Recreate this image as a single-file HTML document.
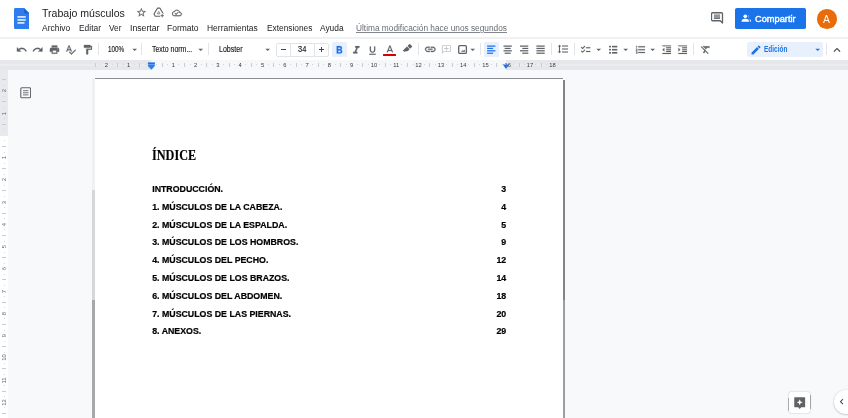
<!DOCTYPE html>
<html>
<head>
<meta charset="utf-8">
<title>Trabajo músculos</title>
<style>
*{margin:0;padding:0;box-sizing:border-box;}
html,body{width:848px;height:418px;overflow:hidden;background:#f8f9fa;font-family:"Liberation Sans",sans-serif;}
.abs{position:absolute;}
#clip{position:absolute;left:0;top:0;width:848px;height:418px;overflow:hidden;}
#root{position:absolute;left:-8px;top:-8px;width:864px;height:434px;background:#f8f9fa;filter:blur(0.5px);}
#in{position:absolute;left:8px;top:8px;width:848px;height:418px;}
.t{position:absolute;white-space:nowrap;line-height:1;}
.sep{position:absolute;top:44px;width:1px;height:12px;background:#dadce0;}
.rn{position:absolute;top:62.4px;font-size:5.8px;color:#3c4043;line-height:7px;width:14px;text-align:center;}
.rv{position:absolute;left:0.5px;font-size:5.8px;color:#5f6368;line-height:7px;width:14px;height:7px;text-align:center;transform:rotate(-90deg);transform-origin:50% 50%;}
.tk{position:absolute;width:1px;background:#cacdd0;}
.tkv{position:absolute;height:1px;background:#cacdd0;}
</style>
</head>
<body>
<div id="clip"><div id="root"><div id="in">

<div class="abs" style="left:-8px;top:-8px;width:864px;height:45px;background:#fff;"></div>
<div class="abs" style="left:-8px;top:38px;width:864px;height:23px;background:#fff;"></div>
<div class="abs" style="left:-8px;top:36.8px;width:864px;height:2.200px;background:#f0f1f3;"></div>
<div class="abs" style="left:-8px;top:60.2px;width:864px;height:9.7px;background:#e5e7ea;"></div>
<div class="abs" style="left:-8px;top:64.2px;width:864px;height:1.600px;background:#eaecee;"></div>
<div class="abs" style="left:151px;top:60.2px;width:355px;height:9.700px;background:#f6f7f9;"></div>
<div class="abs" style="left:-8px;top:70px;width:16px;height:356px;background:#fff;"></div>
<div class="abs" style="left:-8px;top:69.800px;width:16px;height:66px;background:#e7e9ec;"></div>
<div class="rn" style="left:99.4px">2</div>
<div class="rn" style="left:121.7px">1</div>
<div class="rn" style="left:166.3px">1</div>
<div class="rn" style="left:188.6px">2</div>
<div class="rn" style="left:210.9px">3</div>
<div class="rn" style="left:233.2px">4</div>
<div class="rn" style="left:255.5px">5</div>
<div class="rn" style="left:277.8px">6</div>
<div class="rn" style="left:300.1px">7</div>
<div class="rn" style="left:322.4px">8</div>
<div class="rn" style="left:344.7px">9</div>
<div class="rn" style="left:367.0px">10</div>
<div class="rn" style="left:389.3px">11</div>
<div class="rn" style="left:411.6px">12</div>
<div class="rn" style="left:433.9px">13</div>
<div class="rn" style="left:456.2px">14</div>
<div class="rn" style="left:478.5px">15</div>
<div class="rn" style="left:500.8px">16</div>
<div class="rn" style="left:523.1px">17</div>
<div class="rn" style="left:545.4px">18</div>
<div class="tk" style="left:94.8px;top:63px;height:3.800px"></div>
<div class="tk" style="left:100.3px;top:64.300px;height:1px;opacity:.8"></div>
<div class="tk" style="left:111.5px;top:64.300px;height:1px;opacity:.8"></div>
<div class="tk" style="left:117.0px;top:63px;height:3.800px"></div>
<div class="tk" style="left:122.6px;top:64.300px;height:1px;opacity:.8"></div>
<div class="tk" style="left:133.8px;top:64.300px;height:1px;opacity:.8"></div>
<div class="tk" style="left:139.3px;top:63px;height:3.800px"></div>
<div class="tk" style="left:144.9px;top:64.300px;height:1px;opacity:.8"></div>
<div class="tk" style="left:156.1px;top:64.300px;height:1px;opacity:.8"></div>
<div class="tk" style="left:161.7px;top:63px;height:3.800px"></div>
<div class="tk" style="left:167.2px;top:64.300px;height:1px;opacity:.8"></div>
<div class="tk" style="left:178.4px;top:64.300px;height:1px;opacity:.8"></div>
<div class="tk" style="left:183.9px;top:63px;height:3.800px"></div>
<div class="tk" style="left:189.5px;top:64.300px;height:1px;opacity:.8"></div>
<div class="tk" style="left:200.7px;top:64.300px;height:1px;opacity:.8"></div>
<div class="tk" style="left:206.2px;top:63px;height:3.800px"></div>
<div class="tk" style="left:211.8px;top:64.300px;height:1px;opacity:.8"></div>
<div class="tk" style="left:223.0px;top:64.300px;height:1px;opacity:.8"></div>
<div class="tk" style="left:228.6px;top:63px;height:3.800px"></div>
<div class="tk" style="left:234.1px;top:64.300px;height:1px;opacity:.8"></div>
<div class="tk" style="left:245.3px;top:64.300px;height:1px;opacity:.8"></div>
<div class="tk" style="left:250.9px;top:63px;height:3.800px"></div>
<div class="tk" style="left:256.4px;top:64.300px;height:1px;opacity:.8"></div>
<div class="tk" style="left:267.6px;top:64.300px;height:1px;opacity:.8"></div>
<div class="tk" style="left:273.1px;top:63px;height:3.800px"></div>
<div class="tk" style="left:278.7px;top:64.300px;height:1px;opacity:.8"></div>
<div class="tk" style="left:289.9px;top:64.300px;height:1px;opacity:.8"></div>
<div class="tk" style="left:295.5px;top:63px;height:3.800px"></div>
<div class="tk" style="left:301.0px;top:64.300px;height:1px;opacity:.8"></div>
<div class="tk" style="left:312.2px;top:64.300px;height:1px;opacity:.8"></div>
<div class="tk" style="left:317.8px;top:63px;height:3.800px"></div>
<div class="tk" style="left:323.3px;top:64.300px;height:1px;opacity:.8"></div>
<div class="tk" style="left:334.5px;top:64.300px;height:1px;opacity:.8"></div>
<div class="tk" style="left:340.1px;top:63px;height:3.800px"></div>
<div class="tk" style="left:345.6px;top:64.300px;height:1px;opacity:.8"></div>
<div class="tk" style="left:356.8px;top:64.300px;height:1px;opacity:.8"></div>
<div class="tk" style="left:362.4px;top:63px;height:3.800px"></div>
<div class="tk" style="left:367.9px;top:64.300px;height:1px;opacity:.8"></div>
<div class="tk" style="left:379.1px;top:64.300px;height:1px;opacity:.8"></div>
<div class="tk" style="left:384.6px;top:63px;height:3.800px"></div>
<div class="tk" style="left:390.2px;top:64.300px;height:1px;opacity:.8"></div>
<div class="tk" style="left:401.4px;top:64.300px;height:1px;opacity:.8"></div>
<div class="tk" style="left:406.9px;top:63px;height:3.800px"></div>
<div class="tk" style="left:412.5px;top:64.300px;height:1px;opacity:.8"></div>
<div class="tk" style="left:423.7px;top:64.300px;height:1px;opacity:.8"></div>
<div class="tk" style="left:429.2px;top:63px;height:3.800px"></div>
<div class="tk" style="left:434.8px;top:64.300px;height:1px;opacity:.8"></div>
<div class="tk" style="left:446.0px;top:64.300px;height:1px;opacity:.8"></div>
<div class="tk" style="left:451.6px;top:63px;height:3.800px"></div>
<div class="tk" style="left:457.1px;top:64.300px;height:1px;opacity:.8"></div>
<div class="tk" style="left:468.3px;top:64.300px;height:1px;opacity:.8"></div>
<div class="tk" style="left:473.9px;top:63px;height:3.800px"></div>
<div class="tk" style="left:479.4px;top:64.300px;height:1px;opacity:.8"></div>
<div class="tk" style="left:490.6px;top:64.300px;height:1px;opacity:.8"></div>
<div class="tk" style="left:496.2px;top:63px;height:3.800px"></div>
<div class="tk" style="left:501.7px;top:64.300px;height:1px;opacity:.8"></div>
<div class="tk" style="left:512.9px;top:64.300px;height:1px;opacity:.8"></div>
<div class="tk" style="left:518.5px;top:63px;height:3.800px"></div>
<div class="tk" style="left:524.0px;top:64.300px;height:1px;opacity:.8"></div>
<div class="tk" style="left:535.2px;top:64.300px;height:1px;opacity:.8"></div>
<div class="tk" style="left:540.8px;top:63px;height:3.800px"></div>
<div class="tk" style="left:546.3px;top:64.300px;height:1px;opacity:.8"></div>
<div class="tk" style="left:557.5px;top:64.300px;height:1px;opacity:.8"></div>
<div class="rv" style="top:87.3px;left:-3px">2</div>
<div class="rv" style="top:109.6px;left:-3px">1</div>
<div class="rv" style="top:154.1px;left:-3px">1</div>
<div class="rv" style="top:176.3px;left:-3px">2</div>
<div class="rv" style="top:198.6px;left:-3px">3</div>
<div class="rv" style="top:220.8px;left:-3px">4</div>
<div class="rv" style="top:243.1px;left:-3px">5</div>
<div class="rv" style="top:265.3px;left:-3px">6</div>
<div class="rv" style="top:287.6px;left:-3px">7</div>
<div class="rv" style="top:309.8px;left:-3px">8</div>
<div class="rv" style="top:332.1px;left:-3px">9</div>
<div class="rv" style="top:354.3px;left:-3px">10</div>
<div class="rv" style="top:376.6px;left:-3px">11</div>
<div class="rv" style="top:398.8px;left:-3px">12</div>
<div class="tkv" style="top:79.2px;left:2.300px;width:3.400px"></div>
<div class="tkv" style="top:84.7px;left:3.500px;width:1px;opacity:.8"></div>
<div class="tkv" style="top:95.9px;left:3.500px;width:1px;opacity:.8"></div>
<div class="tkv" style="top:101.4px;left:2.300px;width:3.400px"></div>
<div class="tkv" style="top:107.0px;left:3.500px;width:1px;opacity:.8"></div>
<div class="tkv" style="top:118.1px;left:3.500px;width:1px;opacity:.8"></div>
<div class="tkv" style="top:123.7px;left:2.300px;width:3.400px"></div>
<div class="tkv" style="top:129.2px;left:3.500px;width:1px;opacity:.8"></div>
<div class="tkv" style="top:140.4px;left:3.500px;width:1px;opacity:.8"></div>
<div class="tkv" style="top:145.9px;left:2.300px;width:3.400px"></div>
<div class="tkv" style="top:151.5px;left:3.500px;width:1px;opacity:.8"></div>
<div class="tkv" style="top:162.6px;left:3.500px;width:1px;opacity:.8"></div>
<div class="tkv" style="top:168.2px;left:2.300px;width:3.400px"></div>
<div class="tkv" style="top:173.7px;left:3.500px;width:1px;opacity:.8"></div>
<div class="tkv" style="top:184.9px;left:3.500px;width:1px;opacity:.8"></div>
<div class="tkv" style="top:190.4px;left:2.300px;width:3.400px"></div>
<div class="tkv" style="top:196.0px;left:3.500px;width:1px;opacity:.8"></div>
<div class="tkv" style="top:207.1px;left:3.500px;width:1px;opacity:.8"></div>
<div class="tkv" style="top:212.7px;left:2.300px;width:3.400px"></div>
<div class="tkv" style="top:218.2px;left:3.500px;width:1px;opacity:.8"></div>
<div class="tkv" style="top:229.4px;left:3.500px;width:1px;opacity:.8"></div>
<div class="tkv" style="top:234.9px;left:2.300px;width:3.400px"></div>
<div class="tkv" style="top:240.5px;left:3.500px;width:1px;opacity:.8"></div>
<div class="tkv" style="top:251.6px;left:3.500px;width:1px;opacity:.8"></div>
<div class="tkv" style="top:257.2px;left:2.300px;width:3.400px"></div>
<div class="tkv" style="top:262.7px;left:3.500px;width:1px;opacity:.8"></div>
<div class="tkv" style="top:273.9px;left:3.500px;width:1px;opacity:.8"></div>
<div class="tkv" style="top:279.4px;left:2.300px;width:3.400px"></div>
<div class="tkv" style="top:285.0px;left:3.500px;width:1px;opacity:.8"></div>
<div class="tkv" style="top:296.1px;left:3.500px;width:1px;opacity:.8"></div>
<div class="tkv" style="top:301.7px;left:2.300px;width:3.400px"></div>
<div class="tkv" style="top:307.2px;left:3.500px;width:1px;opacity:.8"></div>
<div class="tkv" style="top:318.4px;left:3.500px;width:1px;opacity:.8"></div>
<div class="tkv" style="top:323.9px;left:2.300px;width:3.400px"></div>
<div class="tkv" style="top:329.5px;left:3.500px;width:1px;opacity:.8"></div>
<div class="tkv" style="top:340.6px;left:3.500px;width:1px;opacity:.8"></div>
<div class="tkv" style="top:346.2px;left:2.300px;width:3.400px"></div>
<div class="tkv" style="top:351.7px;left:3.500px;width:1px;opacity:.8"></div>
<div class="tkv" style="top:362.9px;left:3.500px;width:1px;opacity:.8"></div>
<div class="tkv" style="top:368.4px;left:2.300px;width:3.400px"></div>
<div class="tkv" style="top:374.0px;left:3.500px;width:1px;opacity:.8"></div>
<div class="tkv" style="top:385.1px;left:3.500px;width:1px;opacity:.8"></div>
<div class="tkv" style="top:390.7px;left:2.300px;width:3.400px"></div>
<div class="tkv" style="top:396.2px;left:3.500px;width:1px;opacity:.8"></div>
<div class="tkv" style="top:407.4px;left:3.500px;width:1px;opacity:.8"></div>
<div class="tkv" style="top:412.9px;left:2.300px;width:3.400px"></div>
<svg class="abs" style="left:146px;top:60.5px" width="10" height="10" viewBox="0 0 10 10"><rect x="1.900" y="1.400" width="7.000" height="2" fill="#1a73e8"/><path d="M1.900 3.400 H8.900 V5 L5.400 8.700 L1.900 5 Z" fill="#2f80ed"/></svg>
<svg class="abs" style="left:500.8px;top:60.5px" width="10" height="10" viewBox="0 0 10 10"><path d="M1.800 3.400 L8.200 3.400 L5 7.900 Z" fill="#1a73e8"/></svg>
<div class="abs" style="left:94px;top:78px;width:470px;height:345px;background:#fff;"></div>
<div class="abs" style="left:95px;top:78px;width:468px;height:1px;background:#8a8c8f;"></div>
<div class="abs" style="left:563px;top:80px;width:2.2px;height:220px;background:#828487;"></div>
<div class="abs" style="left:563px;top:300px;width:2.200px;height:126px;background:#9c9ea1;"></div>
<div class="abs" style="left:92px;top:79px;width:3px;height:111px;background:#eff0f2;"></div>
<div class="abs" style="left:92.2px;top:190px;width:3.100px;height:110px;background:#d5d7d9;"></div>
<div class="abs" style="left:92.2px;top:300px;width:3.100px;height:126px;background:#a6a8aa;"></div>
<svg class="abs" style="left:13.5px;top:8.1px" width="15.5" height="21.1" viewBox="0 0 15.5 21.1"><path d="M1.500 0 H10 L15.500 5.500 V19.600 a1.500 1.500 0 0 1 -1.500 1.500 H1.500 a1.500 1.500 0 0 1 -1.500 -1.500 V1.500 a1.500 1.500 0 0 1 1.500 -1.500 z" fill="#2e7cee"/><path d="M10 0 L15.500 5.500 H11.200 a1.200 1.200 0 0 1 -1.200 -1.200 z" fill="#1b62d3"/><rect x="3.400" y="8.100" width="8.300" height="1.650" fill="#e4eefd"/><rect x="3.400" y="11.100" width="8.300" height="1.650" fill="#e4eefd"/><rect x="3.400" y="14.100" width="7.100" height="1.650" fill="#e4eefd"/></svg>
<svg class="abs" style="left:135.9px;top:6.9px;overflow:visible" width="10.8" height="10.8" viewBox="0 0 24 24"><path fill="#5f6368" stroke="#5f6368" stroke-width="0.5" stroke-linejoin="round" d="M22 9.240l-7.190-.620L12 2 9.190 8.630 2 9.240l5.460 4.730L5.820 21 12 17.270 18.180 21l-1.630-7.030L22 9.240zM12 15.400l-3.760 2.270 1-4.280-3.320-2.880 4.380-.380L12 6.100l1.710 4.040 4.380.380-3.320 2.880 1 4.280L12 15.400z"/></svg>
<svg class="abs" style="left:153.3px;top:7.3px" width="11.4" height="10.8" viewBox="0 0 24 23"><path d="M9.3 2.5 H14.700 L22 15 L19.300 19.800 H4.700 L2 15 Z" fill="none" stroke="#5f6368" stroke-width="2.400" stroke-linejoin="round"/><path d="M9 14.500 L12 9.300 L15 14.500 Z" fill="none" stroke="#5f6368" stroke-width="1.500"/><rect x="15" y="14" width="9" height="9" fill="#fff"/><path d="M19.500 15 v7 M16 18.500 h7" stroke="#5f6368" stroke-width="2" fill="none"/></svg>
<svg class="abs" style="left:171.9px;top:8px;overflow:visible" width="9.8" height="9.8" viewBox="0 0 24 24"><path fill="#5f6368" stroke="#5f6368" stroke-width="0.5" stroke-linejoin="round" d="M19.350 10.040C18.670 6.590 15.640 4 12 4 9.110 4 6.600 5.640 5.350 8.040 2.340 8.360 0 10.910 0 14c0 3.310 2.690 6 6 6h13c2.760 0 5-2.240 5-5 0-2.640-2.050-4.780-4.650-4.960zM19 18H6c-2.210 0-4-1.790-4-4 0-2.050 1.530-3.760 3.560-3.970l1.070-.110.500-.950C8.080 7.140 9.940 6 12 6c2.620 0 4.880 1.860 5.390 4.430l.300 1.500 1.530.110c1.560.100 2.780 1.410 2.780 2.960 0 1.650-1.350 3-3 3zm-9-3.820l-2.090-2.090L6.500 13.500 10 17l6.010-6.010-1.410-1.410z"/></svg>
<svg class="abs" style="left:710.6px;top:11.8px" width="13" height="12.4" viewBox="0 0 26 24.8"><path d="M3 1.500 H21 a2 2 0 0 1 2 2 V22 L18.500 17.500 H3 a2 2 0 0 1 -2 -2 V3.500 a2 2 0 0 1 2 -2 z" fill="none" stroke="#5f6368" stroke-width="2.600" stroke-linejoin="round"/><path d="M5.800 6.400 h12.400 M5.800 9.600 h12.400 M5.800 12.800 h12.400" stroke="#70757a" stroke-width="2.500"/></svg>
<div class="abs" style="left:735px;top:8px;width:70.6px;height:21.4px;background:#1a73e8;border-radius:1.800px;"></div>
<svg class="abs" style="left:741.2px;top:13.2px" width="10.8" height="10.8" viewBox="0 0 24 24"><circle cx="9.500" cy="7.500" r="4" fill="#fff"/><path d="M1.500 19.500 v-2.200 c0-2.900 5.300-4.300 8-4.300 s8 1.400 8 4.300 v2.200 z" fill="#fff"/><path d="M15.600 3.800 a4 4 0 0 1 0 7.400 a5.600 5.600 0 0 0 0 -7.400 z M18 13.600 c2.300.600 4.500 1.800 4.500 3.700 v2.200 h-3 v-2.200 c0-1.500-.600-2.700-1.500-3.700z" fill="#fff" opacity=".75"/></svg>
<div class="abs" style="left:817px;top:9px;width:19.6px;height:19.6px;background:#ea6b0a;border-radius:50%;"></div>
<div class="abs" style="left:332.2px;top:42px;width:14.8px;height:14.8px;background:#e8f0fe;border-radius:1.500px;"></div>
<div class="abs" style="left:484px;top:42px;width:15px;height:14.8px;background:#e8f0fe;border-radius:1.500px;"></div>
<div class="abs" style="left:747px;top:42px;width:76px;height:14.8px;background:#e8f0fe;border-radius:2px;"></div>
<svg class="abs" style="left:15.6px;top:44.1px;overflow:visible" width="11.4" height="11.4" viewBox="0 0 24 24"><path fill="#5f6368" stroke="#5f6368" stroke-width="0.5" stroke-linejoin="round" d="M12.5 8c-2.65 0-5.05.99-6.9 2.6L2 7v9h9l-3.620-3.620c1.390-1.160 3.160-1.880 5.120-1.880 3.540 0 6.550 2.310 7.600 5.500l2.370-.780C21.080 11.030 17.150 8 12.500 8z"/></svg>
<svg class="abs" style="left:32.24px;top:44.1px;overflow:visible" width="11.4" height="11.4" viewBox="0 0 24 24"><path fill="#5f6368" stroke="#5f6368" stroke-width="0.5" stroke-linejoin="round" d="M18.400 10.600C16.550 8.990 14.150 8 11.500 8c-4.650 0-8.580 3.030-9.960 7.220L3.900 16c1.050-3.190 4.050-5.500 7.600-5.500 1.950 0 3.730.720 5.120 1.880L13 16h9V7l-3.600 3.600z"/></svg>
<svg class="abs" style="left:48.7px;top:44.25px;overflow:visible" width="11" height="11" viewBox="0 0 24 24"><path fill="#5f6368" stroke="#5f6368" stroke-width="0.5" stroke-linejoin="round" d="M19 8H5c-1.660 0-3 1.340-3 3v6h4v4h12v-4h4v-6c0-1.660-1.340-3-3-3zm-3 11H8v-5h8v5zm3-7c-.550 0-1-.450-1-1s.450-1 1-1 1 .450 1 1-.450 1-1 1zm-1-9H6v4h12V3z"/></svg>
<svg class="abs" style="left:64.7px;top:44.05px;overflow:visible" width="11.4" height="11.4" viewBox="0 0 24 24"><path fill="#5f6368" stroke="#5f6368" stroke-width="0.5" stroke-linejoin="round" d="M12.450 16h2.090L9.430 3H7.570L2.460 16h2.090l1.120-3h5.640l1.140 3zm-6.020-5L8.500 5.480 10.570 11H6.430zm15.160.590l-8.090 8.090L9.830 16l-1.410 1.410 5.090 5.090L23 13l-1.410-1.410z"/></svg>
<svg class="abs" style="left:81.56px;top:44.05px;overflow:visible" width="11.4" height="11.4" viewBox="0 0 24 24"><path fill="#5f6368" stroke="#5f6368" stroke-width="0.5" stroke-linejoin="round" d="M18 4V3c0-.550-.450-1-1-1H5c-.550 0-1 .450-1 1v4c0 .550.450 1 1 1h12c.550 0 1-.450 1-1V6h1v4H9v11c0 .550.450 1 1 1h2c.550 0 1-.450 1-1v-9h8V4h-3z"/></svg>
<div class="abs" style="left:97.6px;top:43.300px;width:1px;height:11.800px;background:#e2e4e7;"></div>
<div class="abs" style="left:141.1px;top:43.300px;width:1px;height:11.800px;background:#e2e4e7;"></div>
<div class="abs" style="left:207.7px;top:43.300px;width:1px;height:11.800px;background:#e2e4e7;"></div>
<div class="abs" style="left:418.2px;top:43.300px;width:1px;height:11.800px;background:#e2e4e7;"></div>
<div class="abs" style="left:480px;top:43.300px;width:1px;height:11.800px;background:#e2e4e7;"></div>
<div class="abs" style="left:551px;top:43.300px;width:1px;height:11.800px;background:#e2e4e7;"></div>
<div class="abs" style="left:573.8px;top:43.300px;width:1px;height:11.800px;background:#e2e4e7;"></div>
<div class="abs" style="left:693.3px;top:43.300px;width:1px;height:11.800px;background:#e2e4e7;"></div>
<div class="abs" style="left:826px;top:43.300px;width:1px;height:11.800px;background:#e2e4e7;"></div>
<svg class="abs" style="left:128.6px;top:44.05px;overflow:visible" width="11.4" height="11.4" viewBox="0 0 24 24"><path fill="#5f6368" d="M7 10l5 5 5-5z"/></svg>
<svg class="abs" style="left:195.3px;top:44.05px;overflow:visible" width="11.4" height="11.4" viewBox="0 0 24 24"><path fill="#5f6368" d="M7 10l5 5 5-5z"/></svg>
<svg class="abs" style="left:262.4px;top:44.05px;overflow:visible" width="11.4" height="11.4" viewBox="0 0 24 24"><path fill="#5f6368" d="M7 10l5 5 5-5z"/></svg>
<div class="abs" style="left:276.4px;top:43.2px;width:52.4px;height:13.4px;border:1px solid #e2e4e7;border-radius:2px;"></div>
<div class="abs" style="left:290.4px;top:43.2px;width:1px;height:13.4px;background:#e2e4e7;"></div>
<div class="abs" style="left:313.8px;top:43.2px;width:1px;height:13.4px;background:#e2e4e7;"></div>
<div class="abs" style="left:280.8px;top:49.0px;width:5.3px;height:1.400px;background:#444746;"></div>
<div class="abs" style="left:318.9px;top:49.0px;width:5.3px;height:1.400px;background:#444746;"></div>
<div class="abs" style="left:320.85px;top:47.050px;width:1.400px;height:5.300px;background:#444746;"></div>
<svg class="abs" style="left:333.1px;top:43.8px;overflow:visible" width="12.6" height="12.6" viewBox="0 0 24 24"><path fill="#1a73e8" stroke="#1a73e8" stroke-width="0.3" stroke-linejoin="round" d="M15.600 10.790c.970-.670 1.650-1.770 1.650-2.790 0-2.260-1.750-4-4-4H7v14h7.040c2.090 0 3.710-1.700 3.710-3.790 0-1.520-.860-2.820-2.150-3.420zM10 6.500h3c.830 0 1.500.670 1.500 1.500s-.670 1.500-1.500 1.500h-3v-3zm3.500 9H10v-3h3.500c.830 0 1.500.670 1.500 1.500s-.670 1.500-1.500 1.500z"/></svg>
<svg class="abs" style="left:349.9px;top:43.8px;overflow:visible" width="12.6" height="12.6" viewBox="0 0 24 24"><path fill="#5f6368" stroke="#5f6368" stroke-width="0.3" stroke-linejoin="round" d="M10 4v3h2.210l-3.420 8H6v3h8v-3h-2.210l3.420-8H18V4z"/></svg>
<svg class="abs" style="left:367.3px;top:45.2px;overflow:visible" width="11" height="11" viewBox="0 0 24 24"><path fill="#5f6368" stroke="#5f6368" stroke-width="0.3" stroke-linejoin="round" d="M12 17c3.310 0 6-2.690 6-6V3h-2.500v8c0 1.930-1.570 3.500-3.500 3.500S8.500 12.930 8.500 11V3H6v8c0 3.310 2.690 6 6 6zm-7 2v2h14v-2H5z"/></svg>
<svg class="abs" style="left:383.9px;top:43.6px;overflow:visible" width="11.8" height="11.8" viewBox="0 0 24 24"><path fill="#5f6368" stroke="#5f6368" stroke-width="0.3" stroke-linejoin="round" d="M11 3L5.500 17h2.250l1.120-3h6.250l1.120 3h2.250L13 3h-2zm-1.380 9L12 5.670 14.380 12H9.620z"/></svg>
<div class="abs" style="left:383.1px;top:54px;width:13.1px;height:2.1px;background:#d50000;border-radius:.5px"></div>
<svg class="abs" style="left:0;top:0;overflow:visible" width="1" height="1"><g transform="translate(407.8 48.4) rotate(45)" fill="#5f6368"><rect x="-1.900" y="-4.600" width="3.800" height="3.200" rx="0.400"/><path d="M-1.900 -0.700 H1.900 V1.800 L-0.200 5 H-1.900 Z"/></g></svg>
<svg class="abs" style="left:423.5px;top:43.4px;overflow:visible" width="12.6" height="12.6" viewBox="0 0 24 24"><path fill="#5f6368" stroke="#5f6368" stroke-width="0.6" stroke-linejoin="round" d="M3.900 12c0-1.710 1.390-3.100 3.100-3.100h4V7H7c-2.760 0-5 2.240-5 5s2.240 5 5 5h4v-1.900H7c-1.710 0-3.100-1.390-3.100-3.100zM8 13h8v-2H8v2zm9-6h-4v1.900h4c1.710 0 3.100 1.390 3.100 3.100s-1.390 3.100-3.100 3.100h-4V17h4c2.760 0 5-2.240 5-5s-2.240-5-5-5z"/></svg>
<svg class="abs" style="left:441px;top:44.4px;overflow:visible" width="10.8" height="10.8" viewBox="0 0 24 24"><path fill="#c4c7c5" d="M20 2H4c-1.100 0-2 .900-2 2v18l4-4h14c1.100 0 2-.900 2-2V4c0-1.100-.900-2-2-2zm0 14H5.170L4 17.170V4h16v12zM11 5h2v4h4v2h-4v4h-2v-4H7V9h4z"/></svg>
<svg class="abs" style="left:0;top:0;overflow:visible" width="1" height="1"><rect x="458.700" y="45.700" width="7.700" height="7.700" rx="1" fill="none" stroke="#5f6368" stroke-width="1.300"/><path d="M461 51.800 L462.300 50.300 L463.100 51.100 L464.300 49.500 L465.300 51.800 Z" fill="#5f6368"/></svg>
<svg class="abs" style="left:466.5px;top:44.05px;overflow:visible" width="11.4" height="11.4" viewBox="0 0 24 24"><path fill="#5f6368" d="M7 10l5 5 5-5z"/></svg>
<svg class="abs" style="left:0;top:0;overflow:visible" width="1" height="1"><rect x="487.10" y="45.48" width="8.30" height="1.25" fill="#1a73e8"/><rect x="487.10" y="47.83" width="6.00" height="1.25" fill="#1a73e8"/><rect x="487.10" y="50.17" width="8.30" height="1.25" fill="#1a73e8"/><rect x="487.10" y="52.58" width="6.00" height="1.25" fill="#1a73e8"/></svg>
<svg class="abs" style="left:0;top:0;overflow:visible" width="1" height="1"><rect x="503.50" y="45.48" width="8.30" height="1.25" fill="#5f6368"/><rect x="504.65" y="47.83" width="6.00" height="1.25" fill="#5f6368"/><rect x="503.50" y="50.17" width="8.30" height="1.25" fill="#5f6368"/><rect x="504.65" y="52.58" width="6.00" height="1.25" fill="#5f6368"/></svg>
<svg class="abs" style="left:0;top:0;overflow:visible" width="1" height="1"><rect x="520.00" y="45.48" width="8.30" height="1.25" fill="#5f6368"/><rect x="522.30" y="47.83" width="6.00" height="1.25" fill="#5f6368"/><rect x="520.00" y="50.17" width="8.30" height="1.25" fill="#5f6368"/><rect x="522.30" y="52.58" width="6.00" height="1.25" fill="#5f6368"/></svg>
<svg class="abs" style="left:0;top:0;overflow:visible" width="1" height="1"><rect x="536.40" y="45.48" width="8.30" height="1.25" fill="#5f6368"/><rect x="536.40" y="47.83" width="8.30" height="1.25" fill="#5f6368"/><rect x="536.40" y="50.17" width="8.30" height="1.25" fill="#5f6368"/><rect x="536.40" y="52.58" width="8.30" height="1.25" fill="#5f6368"/></svg>
<svg class="abs" style="left:557.1px;top:43.1px;overflow:visible" width="12" height="12" viewBox="0 0 24 24"><path fill="#5f6368" stroke="#5f6368" stroke-width="0.15" stroke-linejoin="round" d="M6 7h2.500L5 3.500 1.500 7H4v10H1.500L5 20.500 8.500 17H6V7zm4-2v2h12V5H10zm0 14h12v-2H10v2zm0-6h12v-2H10v2z"/></svg>
<svg class="abs" style="left:580.3px;top:44px;overflow:visible" width="11.2" height="11.2" viewBox="0 0 24 24"><path fill="#5f6368" stroke="#5f6368" stroke-width="0.4" stroke-linejoin="round" d="M22 7h-9v2h9V7zm0 8h-9v2h9v-2zM5.540 11L2 7.460l1.410-1.410 2.120 2.120 4.240-4.240 1.410 1.410L5.540 11zm0 8L2 15.460l1.410-1.410 2.120 2.120 4.240-4.240 1.410 1.410L5.540 19z"/></svg>
<svg class="abs" style="left:593.2px;top:44.05px;overflow:visible" width="11.4" height="11.4" viewBox="0 0 24 24"><path fill="#5f6368" d="M7 10l5 5 5-5z"/></svg>
<svg class="abs" style="left:0;top:0;overflow:visible" width="1" height="1"><rect x="609.10" y="45.80" width="1.90" height="1.60" fill="#5f6368"/><rect x="612.00" y="45.80" width="5.30" height="1.60" fill="#5f6368"/><rect x="609.10" y="48.90" width="1.90" height="1.60" fill="#5f6368"/><rect x="612.00" y="48.90" width="5.30" height="1.60" fill="#5f6368"/><rect x="609.10" y="52.00" width="1.90" height="1.60" fill="#5f6368"/><rect x="612.00" y="52.00" width="5.30" height="1.60" fill="#5f6368"/></svg>
<svg class="abs" style="left:620.4px;top:44.05px;overflow:visible" width="11.4" height="11.4" viewBox="0 0 24 24"><path fill="#5f6368" d="M7 10l5 5 5-5z"/></svg>
<svg class="abs" style="left:634.7px;top:44.05px;overflow:visible" width="11.4" height="11.4" viewBox="0 0 24 24"><path fill="#5f6368" stroke="#5f6368" stroke-width="0.5" stroke-linejoin="round" d="M2 17h2v.500H3v1h1v.500H2v1h3v-4H2v1zm1-9h1V4H2v1h1v3zm-1 3h1.800L2 13.100v.900h3v-1H3.200L5 10.900V10H2v1zm5-6v2h14V5H7zm0 14h14v-2H7v2zm0-6h14v-2H7v2z"/></svg>
<svg class="abs" style="left:647.2px;top:44.05px;overflow:visible" width="11.4" height="11.4" viewBox="0 0 24 24"><path fill="#5f6368" d="M7 10l5 5 5-5z"/></svg>
<svg class="abs" style="left:660.9px;top:44.05px;overflow:visible" width="11.4" height="11.4" viewBox="0 0 24 24"><path fill="#5f6368" stroke="#5f6368" stroke-width="0.4" stroke-linejoin="round" d="M11 17h10v-2H11v2zm-8-5l4 4V8l-4 4zm0 9h18v-2H3v2zM3 3v2h18V3H3zm8 6h10V7H11v2zm0 4h10v-2H11v2z"/></svg>
<svg class="abs" style="left:677.2px;top:44.05px;overflow:visible" width="11.4" height="11.4" viewBox="0 0 24 24"><path fill="#5f6368" stroke="#5f6368" stroke-width="0.4" stroke-linejoin="round" d="M3 21h18v-2H3v2zM3 8v8l4-4-4-4zm8 9h10v-2H11v2zM3 3v2h18V3H3zm8 6h10V7H11v2zm0 4h10v-2H11v2z"/></svg>
<svg class="abs" style="left:699.8px;top:44.05px;overflow:visible" width="11.4" height="11.4" viewBox="0 0 24 24"><path fill="#5f6368" stroke="#5f6368" stroke-width="0.5" stroke-linejoin="round" d="M3.270 5L2 6.270l6.970 6.970L6.500 19h3l1.570-3.660L16.730 21 18 19.730 3.550 5.270 3.270 5zM6 5v.180L8.820 8h2.400l-.720 1.680 2.100 2.100L14.210 8H20V5H6z"/></svg>
<svg class="abs" style="left:749.6px;top:43.6px;overflow:visible" width="12" height="12" viewBox="0 0 24 24"><path fill="#1a73e8" d="M3 17.250V21h3.750L17.810 9.940l-3.750-3.750L3 17.250zM20.710 7.040c.390-.390.390-1.020 0-1.410l-2.340-2.340c-.390-.390-1.020-.390-1.410 0l-1.830 1.830 3.750 3.750 1.830-1.830z"/></svg>
<svg class="abs" style="left:812.2px;top:44.05px;overflow:visible" width="11.4" height="11.4" viewBox="0 0 24 24"><path fill="#1a73e8" d="M7 10l5 5 5-5z"/></svg>
<svg class="abs" style="left:830.4px;top:42.7px;overflow:visible" width="14" height="14" viewBox="0 0 24 24"><path fill="#3c4043" d="M12 8l-6 6 1.410 1.410L12 10.830l4.590 4.580L18 14z"/></svg>
<svg class="abs" style="left:19.8px;top:87.2px" width="11.4" height="11.6" viewBox="0 0 22.8 23.2"><rect x="1.600" y="1.600" width="19.600" height="20" rx="2" fill="none" stroke="#5f6368" stroke-width="2.200"/><path d="M6 7.400 h11 M6 11.600 h11 M6 15.800 h11" stroke="#5f6368" stroke-width="1.800"/></svg>
<div class="abs" style="left:788.6px;top:391.6px;width:21.6px;height:21.6px;background:#fff;border-radius:2px;box-shadow:0 0 1.500px rgba(60,64,67,.45);"></div>
<div class="abs" style="left:788.4px;top:398px;width:0.8px;height:13px;background:rgba(60,64,67,.35);"></div>
<div class="abs" style="left:809.8px;top:395px;width:0.8px;height:14px;background:rgba(60,64,67,.4);"></div>
<svg class="abs" style="left:794.2px;top:397.2px" width="11.4" height="12.6" viewBox="0 0 22.8 25.2"><path d="M1.500 0.500 H21.300 a1 1 0 0 1 1 1 V19.500 a1 1 0 0 1 -1 1 H14.400 L11.400 24 L8.400 20.500 H1.500 a1 1 0 0 1 -1 -1 V1.500 a1 1 0 0 1 1 -1 z" fill="#5f6368"/><path d="M11.400 4.600 L13.100 8.900 L17.400 10.600 L13.100 12.300 L11.400 16.600 L9.700 12.300 L5.400 10.600 L9.700 8.900 Z" fill="#fff"/></svg>
<div class="abs" style="left:834px;top:389.6px;width:26px;height:24.6px;background:#fff;border-radius:12.3px;box-shadow:0 0.500px 2px rgba(60,64,67,.4);"></div>
<svg class="abs" style="left:836.4px;top:396.4px;overflow:visible" width="11.4" height="11.4" viewBox="0 0 24 24"><path fill="#3c4043" d="M15.410 7.410L14 6l-6 6 6 6 1.410-1.410L10.830 12z"/></svg>
<div class="t" style="font-size:10.5px;color:#202124;left:42px;top:7.71px;transform:scale(1.0038,1);transform-origin:0 0px;">Trabajo músculos</div>
<div class="t" style="font-size:8.5px;color:#202124;left:42px;top:23.80px;transform:scale(0.9949,1);transform-origin:0 0px;">Archivo</div>
<div class="t" style="font-size:8.5px;color:#202124;left:78.6px;top:23.80px;transform:scale(0.9902,1);transform-origin:0 0px;">Editar</div>
<div class="t" style="font-size:8.5px;color:#202124;left:108.8px;top:23.80px;transform:scale(0.9714,1);transform-origin:0 0px;">Ver</div>
<div class="t" style="font-size:8.5px;color:#202124;left:129.6px;top:23.80px;transform:scale(1.0198,1);transform-origin:0 0px;">Insertar</div>
<div class="t" style="font-size:8.5px;color:#202124;left:167.2px;top:23.80px;transform:scale(0.9982,1);transform-origin:0 0px;">Formato</div>
<div class="t" style="font-size:8.5px;color:#202124;left:207.2px;top:23.80px;transform:scale(0.9955,1);transform-origin:0 0px;">Herramientas</div>
<div class="t" style="font-size:8.5px;color:#202124;left:266.6px;top:23.80px;transform:scale(0.9803,1);transform-origin:0 0px;">Extensiones</div>
<div class="t" style="font-size:8.5px;color:#202124;left:320.2px;top:23.80px;transform:scale(0.9853,1);transform-origin:0 0px;">Ayuda</div>
<div class="t" style="font-size:8.5px;color:#676c71;text-decoration:underline;text-decoration-thickness:0.6px;text-underline-offset:0.6px;text-decoration-color:#80868b;left:356.2px;top:23.80px;transform:scale(0.9772,1);transform-origin:0 0px;">Última modificación hace unos segundos</div>
<div class="t" style="font-size:8.9px;color:#ffffff;-webkit-text-stroke:0.4px #fff;left:754.8px;top:14.67px;transform:scale(1.0419,1);transform-origin:0 0px;">Compartir</div>
<div class="t" style="font-size:10px;color:#ffffff;left:823.4px;top:14.89px;transform:scale(1.0342,1);transform-origin:0 0px;">A</div>
<div class="t" style="font-size:8.2px;color:#202124;-webkit-text-stroke:0.15px #202124;left:107.6px;top:46.00px;transform:scale(0.7732,1);transform-origin:0 0px;">100%</div>
<div class="t" style="font-size:8.2px;color:#202124;-webkit-text-stroke:0.15px #202124;left:151.8px;top:46.00px;transform:scale(0.8494,1);transform-origin:0 0px;">Texto norm...</div>
<div class="t" style="font-size:8.2px;color:#202124;-webkit-text-stroke:0.15px #202124;left:218.8px;top:46.00px;transform:scale(0.8641,1);transform-origin:0 0px;">Lobster</div>
<div class="t" style="font-size:8.2px;color:#202124;-webkit-text-stroke:0.15px #202124;left:298.4px;top:46.00px;transform:scale(0.9111,1);transform-origin:0 0px;">34</div>
<div class="t" style="font-size:8.2px;color:#1a73e8;font-weight:bold;left:764.4px;top:46.00px;transform:scale(0.7911,1);transform-origin:0 0px;">Edición</div>
<div class="t" style="font-size:13.6px;color:#000;font-weight:bold;font-family:'Liberation Serif',serif;-webkit-text-stroke:0.15px #000;left:152.2px;top:149.00px;transform:scale(0.8980,1);transform-origin:0 0px;">ÍNDICE</div>
<div class="t" style="font-size:8.8px;color:#000;font-weight:bold;-webkit-text-stroke:0.2px #000;left:152.2px;top:185.00px;">INTRODUCCIÓN.</div>
<div class="t" style="font-size:8.8px;color:#000;font-weight:bold;-webkit-text-stroke:0.2px #000;left:501.294px;top:185.00px;">3</div>
<div class="t" style="font-size:8.8px;color:#000;font-weight:bold;-webkit-text-stroke:0.2px #000;left:152.2px;top:203.00px;">1. MÚSCULOS DE LA CABEZA.</div>
<div class="t" style="font-size:8.8px;color:#000;font-weight:bold;-webkit-text-stroke:0.2px #000;left:501.294px;top:203.00px;">4</div>
<div class="t" style="font-size:8.8px;color:#000;font-weight:bold;-webkit-text-stroke:0.2px #000;left:152.2px;top:221.00px;">2. MÚSCULOS DE LA ESPALDA.</div>
<div class="t" style="font-size:8.8px;color:#000;font-weight:bold;-webkit-text-stroke:0.2px #000;left:501.294px;top:221.00px;">5</div>
<div class="t" style="font-size:8.8px;color:#000;font-weight:bold;-webkit-text-stroke:0.2px #000;left:152.2px;top:238.00px;">3. MÚSCULOS DE LOS HOMBROS.</div>
<div class="t" style="font-size:8.8px;color:#000;font-weight:bold;-webkit-text-stroke:0.2px #000;left:501.294px;top:238.00px;">9</div>
<div class="t" style="font-size:8.8px;color:#000;font-weight:bold;-webkit-text-stroke:0.2px #000;left:152.2px;top:256.00px;">4. MÚSCULOS DEL PECHO.</div>
<div class="t" style="font-size:8.8px;color:#000;font-weight:bold;-webkit-text-stroke:0.2px #000;left:496.403px;top:256.00px;">12</div>
<div class="t" style="font-size:8.8px;color:#000;font-weight:bold;-webkit-text-stroke:0.2px #000;left:152.2px;top:274.00px;">5. MÚSCULOS DE LOS BRAZOS.</div>
<div class="t" style="font-size:8.8px;color:#000;font-weight:bold;-webkit-text-stroke:0.2px #000;left:496.403px;top:274.00px;">14</div>
<div class="t" style="font-size:8.8px;color:#000;font-weight:bold;-webkit-text-stroke:0.2px #000;left:152.2px;top:292.00px;">6. MÚSCULOS DEL ABDOMEN.</div>
<div class="t" style="font-size:8.8px;color:#000;font-weight:bold;-webkit-text-stroke:0.2px #000;left:496.403px;top:292.00px;">18</div>
<div class="t" style="font-size:8.8px;color:#000;font-weight:bold;-webkit-text-stroke:0.2px #000;left:152.2px;top:310.00px;">7. MÚSCULOS DE LAS PIERNAS.</div>
<div class="t" style="font-size:8.8px;color:#000;font-weight:bold;-webkit-text-stroke:0.2px #000;left:496.403px;top:310.00px;">20</div>
<div class="t" style="font-size:8.8px;color:#000;font-weight:bold;-webkit-text-stroke:0.2px #000;left:152.2px;top:327.00px;">8. ANEXOS.</div>
<div class="t" style="font-size:8.8px;color:#000;font-weight:bold;-webkit-text-stroke:0.2px #000;left:496.403px;top:327.00px;">29</div>

</div></div></div>
</body>
</html>
